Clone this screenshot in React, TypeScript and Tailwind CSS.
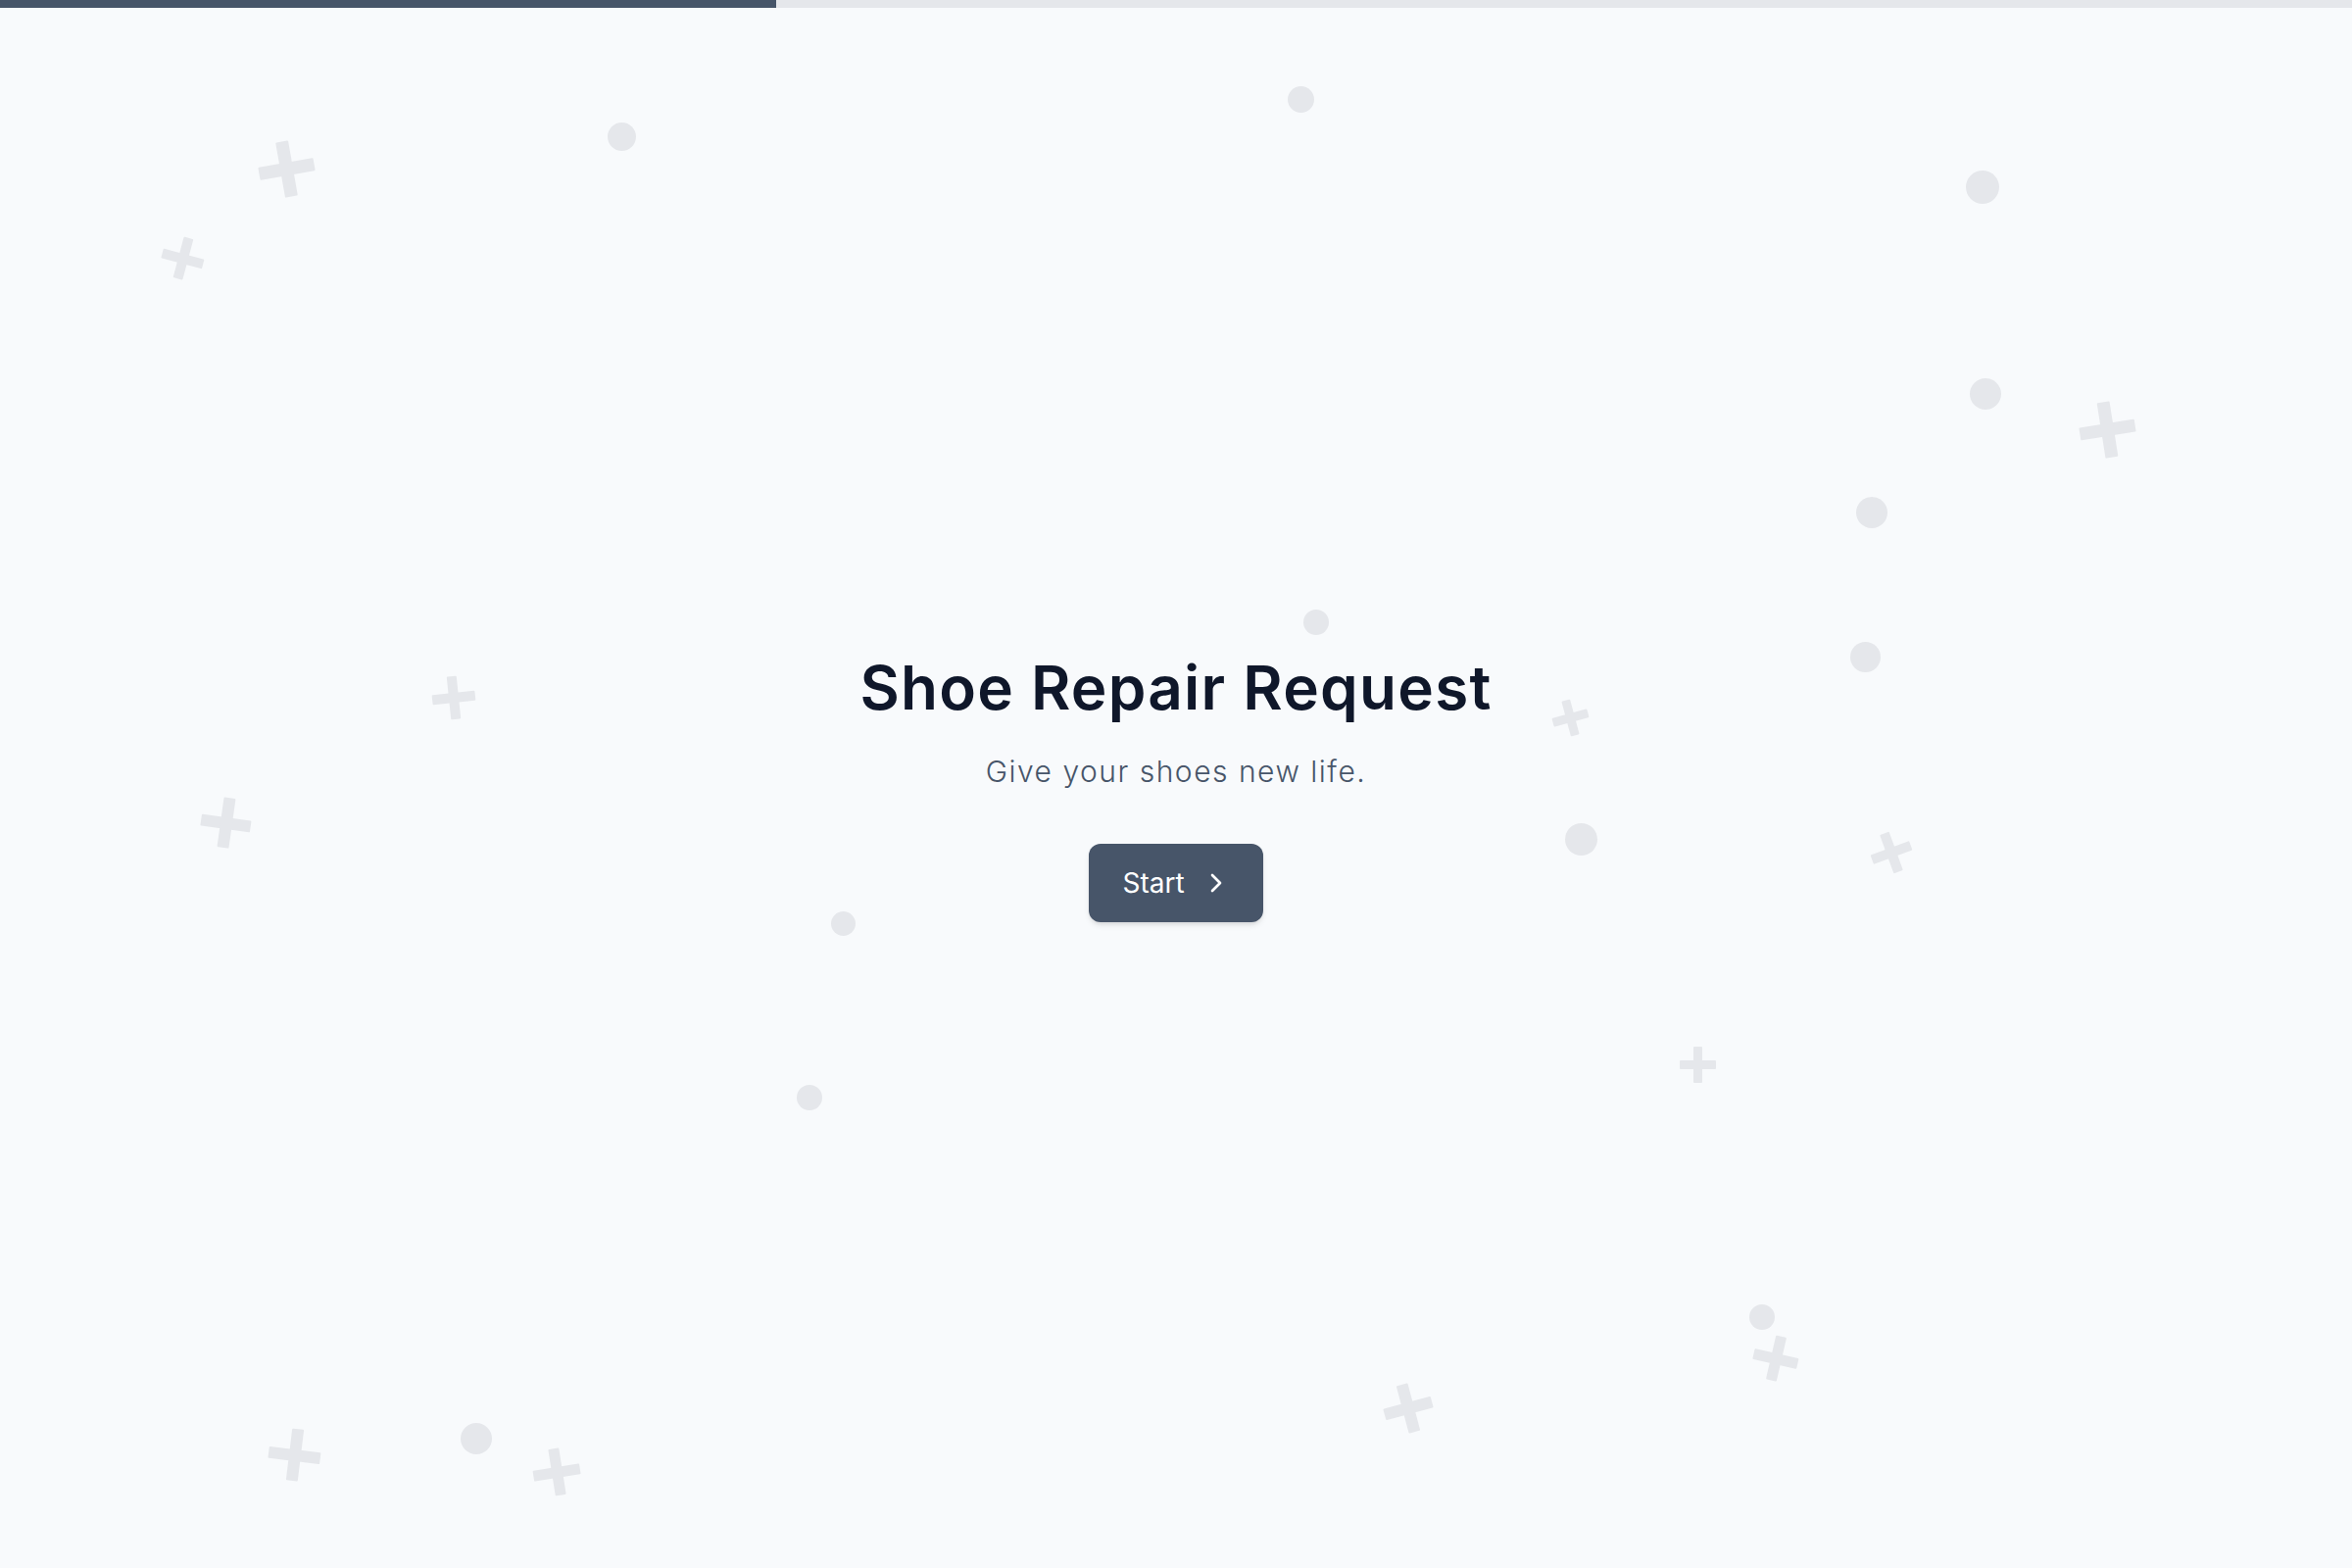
import React from "react";
import { ChevronRight } from "lucide-react";

type Dot = { x: number; y: number; d: number };
type Cross = { x: number; y: number; s: number; r: number };

// scattered background shapes, centre coords in px
const dots: Dot[] = [
  { x: 634, y: 139, d: 29 },
  { x: 1327, y: 101, d: 27 },
  { x: 2023, y: 191, d: 34 },
  { x: 2026, y: 402, d: 32 },
  { x: 1910, y: 523, d: 32 },
  { x: 1343, y: 635, d: 26 },
  { x: 1903, y: 670, d: 31 },
  { x: 1613, y: 856, d: 33 },
  { x: 860, y: 942, d: 25 },
  { x: 826, y: 1120, d: 26 },
  { x: 1798, y: 1344, d: 26 },
  { x: 486, y: 1468, d: 32 },
];

const crosses: Cross[] = [
  { x: 292, y: 172, s: 57, r: -10 },
  { x: 186, y: 263, s: 43, r: 15 },
  { x: 2150, y: 438, s: 57, r: -9 },
  { x: 463, y: 712, s: 44, r: -6 },
  { x: 230, y: 839, s: 51, r: 8 },
  { x: 1602, y: 732, s: 37, r: -15 },
  { x: 1930, y: 870, s: 42, r: -20 },
  { x: 1732, y: 1086, s: 37, r: 0 },
  { x: 1437, y: 1437, s: 50, r: -15 },
  { x: 1812, y: 1386, s: 46, r: 13 },
  { x: 300, y: 1484, s: 53, r: 7 },
  { x: 568, y: 1502, s: 48, r: -9 },
];

// two bars stacked in one grid cell make the plus
const PlusShape = ({ s, r, x, y }: Cross) => {
  const t = Math.round(s * 0.23);
  return (
    <div
      className="absolute grid place-items-center"
      style={{ left: x - s / 2, top: y - s / 2, width: s, height: s, transform: `rotate(${r}deg)` }}
    >
      <div className="col-start-1 row-start-1 bg-[#e5e7eb] rounded-[1px]" style={{ width: s, height: t }} />
      <div className="col-start-1 row-start-1 bg-[#e5e7eb] rounded-[1px]" style={{ width: t, height: s }} />
    </div>
  );
};

const Backdrop = () => (
  <div className="absolute inset-0 pointer-events-none overflow-hidden">
    {dots.map((d, i) => (
      <div
        key={`d${i}`}
        className="absolute rounded-full bg-[#e5e7eb]"
        style={{ left: d.x - d.d / 2, top: d.y - d.d / 2, width: d.d, height: d.d }}
      />
    ))}
    {crosses.map((c, i) => (
      <PlusShape key={`c${i}`} {...c} />
    ))}
  </div>
);

export default function App() {
  return (
    <div className="relative min-h-screen w-full bg-[#f8fafc] overflow-hidden font-['Inter',sans-serif]">
      {/* step progress */}
      <div className="absolute top-0 left-0 right-0 h-2 bg-[#e5e7eb] z-10">
        <div className="h-full w-[33%] bg-[#475569]" />
      </div>

      <Backdrop />

      <main className="relative flex min-h-screen flex-col items-center justify-center pt-3">
        <h1 className="text-[62px] leading-none font-semibold text-[#0f172a] tracking-[0.02em]">
          Shoe Repair Request
        </h1>
        <p className="mt-9 text-[30px] leading-9 font-light text-[#475569] tracking-[0.05em]">
          Give your shoes new life.
        </p>
        <button className="mt-14 flex h-20 items-center gap-4 rounded-xl bg-[#475569] pl-[34px] pr-8 text-[28px] text-white shadow-md">
          Start
          <ChevronRight size={32} strokeWidth={2} />
        </button>
      </main>
    </div>
  );
}
